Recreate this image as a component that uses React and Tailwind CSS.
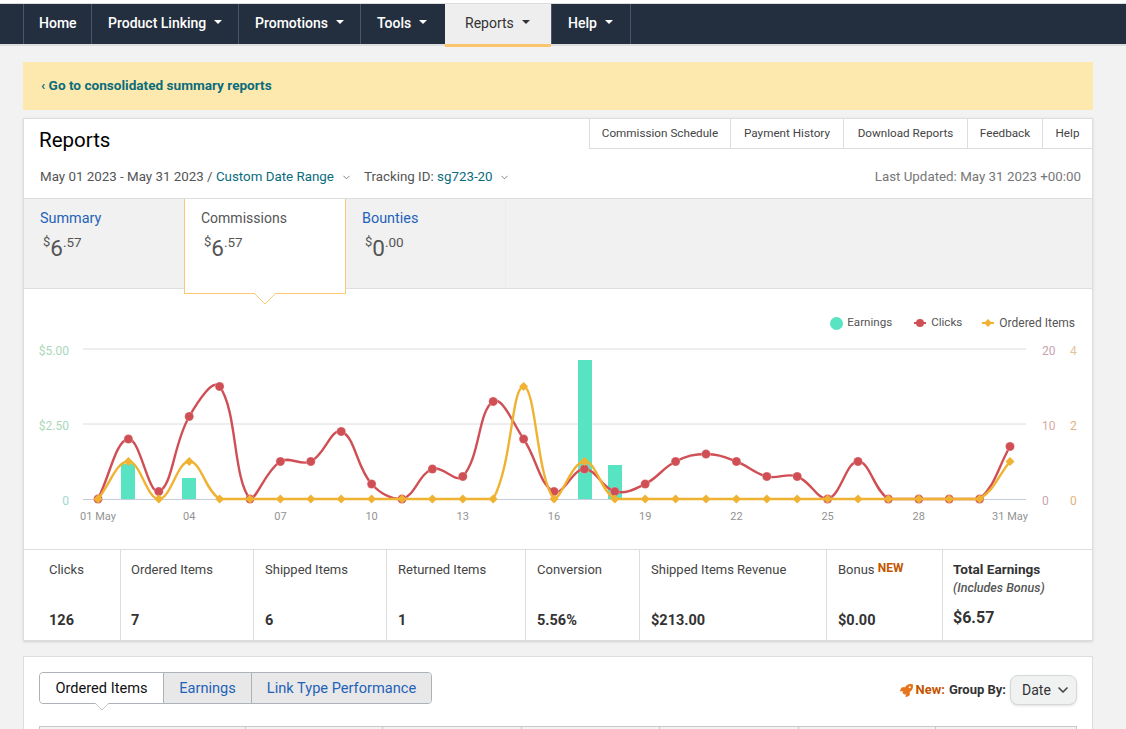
import React from 'react';
import { ChevronDown } from 'lucide-react';
import { FaRocket } from 'react-icons/fa';

const navItems = [
  { label: 'Home', w: 'w-[68px]', pad: 'pl-[15px]' },
  { label: 'Product Linking', w: 'w-[147px]', pad: 'pl-[16px]', caret: true },
  { label: 'Promotions', w: 'w-[122px]', pad: 'pl-[16px]', caret: true },
  { label: 'Tools', w: 'w-[85px]', pad: 'pl-[16px]', caret: true },
  { label: 'Reports', w: 'w-[106px]', pad: 'pl-[20px]', caret: true, active: true },
  { label: 'Help', w: 'w-[80px]', pad: 'pl-[16px]', caret: true },
];

const topLinks = [
  { label: 'Commission Schedule', w: 'w-[141px]' },
  { label: 'Payment History', w: 'w-[113px]' },
  { label: 'Download Reports', w: 'w-[124px]' },
  { label: 'Feedback', w: 'w-[75px]' },
  { label: 'Help', w: 'w-[49px]' },
];

const stats = [
  { label: 'Clicks', value: '126', w: 'w-[97px]', pad: 'pl-[25px]' },
  { label: 'Ordered Items', value: '7', w: 'w-[133px]', pad: 'pl-[10px]' },
  { label: 'Shipped Items', value: '6', w: 'w-[133px]', pad: 'pl-[11px]' },
  { label: 'Returned Items', value: '1', w: 'w-[139px]', pad: 'pl-[11px]' },
  { label: 'Conversion', value: '5.56%', w: 'w-[114px]', pad: 'pl-[11px]' },
  { label: 'Shipped Items Revenue', value: '$213.00', w: 'w-[187px]', pad: 'pl-[11px]' },
];

const tableCols = ['w-[206px]', 'w-[138px]', 'w-[139px]', 'w-[138px]', 'w-[139px]', 'w-[138px]', 'w-[140px]'];

// chart data, one value per day of May
const clicks = [0, 8, 1, 11, 15, 0, 5, 5, 9, 2, 0, 4, 3, 13, 8, 1, 4, 1, 2, 5, 6, 5, 3, 3, 0, 5, 0, 0, 0, 0, 7];
const ordered = [0, 1, 0, 1, 0, 0, 0, 0, 0, 0, 0, 0, 0, 0, 3, 0, 1, 0, 0, 0, 0, 0, 0, 0, 0, 0, 0, 0, 0, 0, 1];
const bars = [
  { x: 121, top: 464 },
  { x: 182, top: 478 },
  { x: 578, top: 360 },
  { x: 608, top: 465 },
];
const xTicks = [
  ['01 May', 1], ['04', 4], ['07', 7], ['10', 10], ['13', 13], ['16', 16],
  ['19', 19], ['22', 22], ['25', 25], ['28', 28], ['31 May', 31],
];

const BASE = 499;
const dayX = (day) => 98 + (day - 1) * 30.4;

const toPoints = (values, step) => values.map((v, i) => ({ x: dayX(i + 1), y: BASE - v * step }));

// same smoothing as a tension 0.4 spline, control points capped at the baseline
const splinePath = (pts) => {
  const ctrl = pts.map((p, i) => {
    const prev = pts[i - 1] || p;
    const next = pts[i + 1] || p;
    const d01 = Math.hypot(p.x - prev.x, p.y - prev.y);
    const d12 = Math.hypot(next.x - p.x, next.y - p.y);
    const sum = d01 + d12 || 1;
    const fa = (0.4 * d01) / sum;
    const fb = (0.4 * d12) / sum;
    return {
      inX: p.x - fa * (next.x - prev.x),
      inY: Math.min(BASE, p.y - fa * (next.y - prev.y)),
      outX: p.x + fb * (next.x - prev.x),
      outY: Math.min(BASE, p.y + fb * (next.y - prev.y)),
    };
  });
  let d = `M${pts[0].x} ${pts[0].y}`;
  for (let i = 1; i < pts.length; i++) {
    d += ` C${ctrl[i - 1].outX} ${ctrl[i - 1].outY} ${ctrl[i].inX} ${ctrl[i].inY} ${pts[i].x} ${pts[i].y}`;
  }
  return d;
};

const Chart = () => {
  const clickPts = toPoints(clicks, 7.5);
  const orderPts = toPoints(ordered, 37.5);
  return (
    <svg width="1068" height="222" viewBox="24 327 1068 222" className="block">
      {[349, 424].map((y) => (
        <line key={y} x1="83" x2="1026" y1={y} y2={y} stroke="#dcdcdc" />
      ))}
      <line x1="83" x2="1026" y1="499.5" y2="499.5" stroke="#c6cbdd" />
      <g fontSize="12">
        <text x="69" y="355" textAnchor="end" fill="#a9d8b8">$5.00</text>
        <text x="69" y="430" textAnchor="end" fill="#a9d8b8">$2.50</text>
        <text x="69" y="505" textAnchor="end" fill="#9fd8d0">0</text>
        <text x="1042" y="355" fill="#c9a3ad">20</text>
        <text x="1042" y="430" fill="#d9a9a0">10</text>
        <text x="1042" y="505" fill="#c9a3ad">0</text>
        <text x="1070" y="355" fill="#e3c39a">4</text>
        <text x="1070" y="430" fill="#e3b27c">2</text>
        <text x="1070" y="505" fill="#e3b27c">0</text>
      </g>
      <g fontSize="11">
        {xTicks.map(([label, day]) => (
          <text key={label} x={dayX(day)} y="520" textAnchor="middle" fill="#939393">{label}</text>
        ))}
      </g>
      {bars.map((b) => (
        <rect key={b.x} x={b.x} y={b.top} width="14" height={BASE - b.top} fill="#58e3c2" />
      ))}
      <path d={splinePath(clickPts)} fill="none" stroke="#cf4f55" strokeWidth="2.4" />
      {clickPts.map((p) => (
        <circle key={p.x} cx={p.x} cy={p.y} r="4.5" fill="#cf4f55" stroke="#ffffff" strokeOpacity="0.5" strokeWidth="0.5" />
      ))}
      <path d={splinePath(orderPts)} fill="none" stroke="#f0b232" strokeWidth="2.4" />
      {orderPts.map((p) => (
        <path key={p.x} d={`M${p.x} ${p.y - 4.5} L${p.x + 4.5} ${p.y} L${p.x} ${p.y + 4.5} L${p.x - 4.5} ${p.y} Z`} fill="#f0b232" />
      ))}
    </svg>
  );
};

const Amount = ({ whole, cents }) => (
  <div className="flex items-start ml-[3px] mt-[7px] text-[#555555]">
    <span className="text-[13px] leading-[16px]">$</span>
    <span className="text-[22.5px] leading-[26px] mt-[1px]">{whole}</span>
    <span className="text-[13.5px] leading-[16px]">.{cents}</span>
  </div>
);

const LegendMark = ({ color, diamond }) => (
  <svg width="12" height="8" viewBox="0 0 12 8" className="mr-[5px]">
    <line x1="0" x2="12" y1="4" y2="4" stroke={color} strokeWidth="2" />
    {diamond ? (
      <path d="M6 0 L10 4 L6 8 L2 4 Z" fill={color} />
    ) : (
      <circle cx="6" cy="4" r="4" fill={color} />
    )}
  </svg>
);

export default function App() {
  return (
    <div className="h-screen overflow-hidden bg-[#f2f2f2] font-[Roboto,sans-serif] text-[13px] text-[#444444]">
      {/* Top nav */}
      <div className="h-[4px] bg-white border-b border-[#dddddd]"></div>
      <div className="h-[40px] bg-[#232f3e] pl-[23px] flex">
        {navItems.map((item) => (
          <div
            key={item.label}
            className={
              item.active
                ? `${item.w} ${item.pad} h-[43px] pb-[2px] flex items-center bg-[#eeeeee] border-b-[3px] border-[#fbc56d] text-[#333333] text-[14px] z-10`
                : `${item.w} ${item.pad} h-[40px] pb-[2px] flex items-center border-l border-[#4a5568] last:border-r text-white text-[14px] font-medium`
            }
          >
            <span>{item.label}</span>
            {item.caret && (
              <span
                className={`ml-[8px] mb-[3px] w-0 h-0 border-x-[4px] border-x-transparent border-t-[4px] ${
                  item.active ? 'border-t-[#333333]' : 'border-t-white'
                }`}
              ></span>
            )}
          </div>
        ))}
      </div>
      <div className="h-[2px] bg-[#dddddd]"></div>

      {/* Banner */}
      <div className="ml-[23px] w-[1070px] h-[48px] mt-[16px] pb-[2px] bg-[#fde9ae] flex items-center pl-[18px] text-[13.6px] font-bold text-[#0a6c7c]">
        ‹ Go to consolidated summary reports
      </div>

      {/* Reports card */}
      <div className="ml-[23px] w-[1070px] mt-[8px] bg-white border border-[#dddddd] shadow-sm">
        <div className="h-[79px]">
          <div className="h-[42px] flex justify-between items-start">
            <h1 className="pl-[15px] pt-[7px] text-[20.5px] leading-[28px] text-black">Reports</h1>
            <div className="flex h-[30px] border-b border-l border-[#dddddd]">
              {topLinks.map((link) => (
                <div key={link.label} className={`${link.w} pt-[1px] flex items-center justify-center border-r last:border-r-0 border-[#dddddd] text-[11.7px]`}>
                  {link.label}
                </div>
              ))}
            </div>
          </div>
          <div className="h-[32px] flex justify-between items-center pl-[16px] pr-[11px] text-[13.35px] text-[#555555]">
            <div className="flex items-center">
              <span>May 01 2023 - May 31 2023 / <span className="text-[#0a6c7c]">Custom Date Range</span></span>
              <ChevronDown className="w-[11px] h-[11px] ml-[7px] mt-[2px] text-[#777777]" />
              <span className="ml-[12px]">Tracking ID: <span className="text-[#0a6c7c]">sg723-20</span></span>
              <ChevronDown className="w-[11px] h-[11px] ml-[6px] mt-[2px] text-[#777777]" />
            </div>
            <div className="text-[#777777]">Last Updated: May 31 2023 +00:00</div>
          </div>
        </div>

        {/* Summary tabs */}
        <div className="h-[91px] bg-[#f1f1f1] border-y border-[#dddddd] flex">
          <div className="w-[160px] pl-[16px] pt-[11px]">
            <div className="text-[14.4px] leading-[17px] text-[#1f62b8]">Summary</div>
            <Amount whole="6" cents="57" />
          </div>
          <div className="relative z-10 w-[162px] h-[95px] pl-[16px] pt-[10px] bg-white border-x border-b border-[#fcc873]">
            <div className="text-[14px] leading-[18px] text-[#555555]">Commissions</div>
            <Amount whole="6" cents="57" />
            <svg width="24" height="12" viewBox="0 0 24 12" className="absolute left-[68px] top-[94px]">
              <path d="M1 0 L12 11 L23 0" fill="#ffffff" stroke="#fcc873" />
            </svg>
          </div>
          <div className="w-[160px] pl-[16px] pt-[11px] border-r border-[#ececec]">
            <div className="text-[14.4px] leading-[17px] text-[#1f62b8]">Bounties</div>
            <Amount whole="0" cents="00" />
          </div>
        </div>

        {/* Chart */}
        <div className="h-[38px] flex justify-end items-end pr-[17px] text-[11.6px] text-[#555555]">
          <div className="flex items-center h-[16px] mb-[-4px]">
            <span className="w-[13px] h-[13px] rounded-full bg-[#58e3c2] mr-[4px]"></span>
            <span>Earnings</span>
            <span className="ml-[22px]"><LegendMark color="#cf4f55" /></span>
            <span>Clicks</span>
            <span className="ml-[20px]"><LegendMark color="#f0b232" diamond /></span>
            <span className="text-[12px]">Ordered Items</span>
          </div>
        </div>
        <Chart />

        {/* Stats */}
        <div className="h-[91px] flex border-t border-[#dddddd]">
          {stats.map((s) => (
            <div key={s.label} className={`${s.w} ${s.pad} flex flex-col justify-between pt-[12px] pb-[9px] border-r border-[#dddddd]`}>
              <div className="leading-[16px]">{s.label}</div>
              <div className="text-[14.5px] leading-[20px] font-bold text-[#333333]">{s.value}</div>
            </div>
          ))}
          <div className="w-[116px] pl-[11px] flex flex-col justify-between pt-[12px] pb-[9px] border-r border-[#dddddd]">
            <div className="leading-[16px]">
              Bonus <span className="relative -top-[2px] text-[12px] font-bold text-[#c45500]">NEW</span>
            </div>
            <div className="text-[14.5px] leading-[20px] font-bold text-[#333333]">$0.00</div>
          </div>
          <div className="flex-1 pl-[10px] pt-[11px]">
            <div className="leading-[16px] text-[13.6px] font-bold text-[#333333]">Total Earnings</div>
            <div className="mt-[3px] leading-[16px] text-[12.5px] italic font-medium text-[#555555]">(Includes Bonus)</div>
            <div className="mt-[11px] text-[16px] leading-[22px] font-bold text-[#333333]">$6.57</div>
          </div>
        </div>
      </div>

      {/* Ordered items card */}
      <div className="ml-[23px] w-[1070px] h-[120px] mt-[15px] bg-white border border-[#dddddd] px-[15px] pt-[15px]">
        <div className="flex justify-between items-start">
          <div className="relative flex h-[32px] border border-[#adb1b8] rounded-[4px] text-[14.6px] leading-[30px]">
            <div className="w-[123px] text-center text-[#111111] bg-white rounded-l-[4px]">Ordered Items</div>
            <div className="w-[88px] text-center text-[#1f62b8] bg-[#e8e8e8] border-l border-[#adb1b8]">Earnings</div>
            <div className="w-[180px] text-center text-[#1f62b8] bg-[#e8e8e8] border-l border-[#adb1b8] rounded-r-[4px]">Link Type Performance</div>
            <svg width="16" height="8" viewBox="0 0 16 8" className="absolute left-[54px] top-[30px]">
              <path d="M1 0 L8 7 L15 0" fill="#ffffff" stroke="#c8c8c8" />
            </svg>
          </div>
          <div className="flex items-center mt-[3px]">
            <FaRocket className="w-[13px] h-[13px] text-[#e8741c] mr-[3px]" />
            <span className="font-bold text-[#c45500] mr-[4px]">New:</span>
            <span className="font-bold text-[#333333] mr-[4px]">Group By:</span>
            <div className="w-[67px] h-[30px] pl-[11px] flex items-center justify-between pr-[5px] bg-[#f0f2f2] border border-[#d5d9d9] rounded-[8px] shadow-sm text-[14px] text-[#333333]">
              <span>Date</span>
              <ChevronDown className="w-[16px] h-[16px] text-[#444444]" strokeWidth={2.5} />
            </div>
          </div>
        </div>
        <div className="flex h-[30px] mt-[21px] bg-[#f3f3f3] border border-[#c8c8c8]">
          {tableCols.map((w, i) => (
            <div key={i} className={`${w} border-r last:border-r-0 border-[#c8c8c8]`}></div>
          ))}
        </div>
      </div>
    </div>
  );
}
